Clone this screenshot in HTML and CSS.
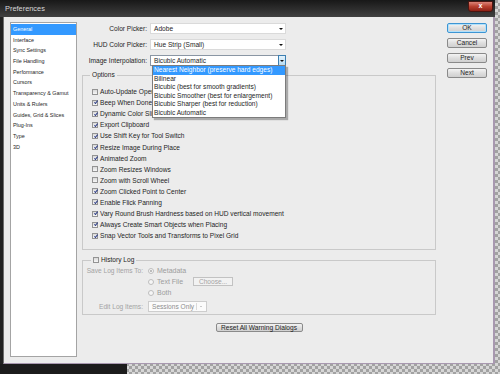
FILE: index.html
```html
<!DOCTYPE html>
<html lang="en">
<head>
    <meta charset="UTF-8">
    <meta name="viewport" content="width=device-width, initial-scale=1.0">
    <title>Preferences</title>
    <link rel="stylesheet" href="styles.css">
</head>
<body>
    <div class="window">
        <div class="titlebar">
            <span class="title">Preferences</span>
            <span class="close">x</span>
        </div>

        <div class="client">
            <ul class="sidebar">
                <li class="selected">General</li>
                <li>Interface</li>
                <li>Sync Settings</li>
                <li>File Handling</li>
                <li>Performance</li>
                <li>Cursors</li>
                <li>Transparency &amp; Gamut</li>
                <li>Units &amp; Rulers</li>
                <li>Guides, Grid &amp; Slices</li>
                <li>Plug-Ins</li>
                <li>Type</li>
                <li>3D</li>
            </ul>

            <div class="main">
                <div class="field">
                    <label>Color Picker:</label>
                    <div class="select"><span>Adobe</span><span class="arrow"></span></div>
                </div>
                <div class="field">
                    <label>HUD Color Picker:</label>
                    <div class="select"><span>Hue Strip (Small)</span><span class="arrow"></span></div>
                </div>
                <div class="field">
                    <label>Image Interpolation:</label>
                    <div class="select open">
                        <span>Bicubic Automatic</span><span class="arrow-btn"><span class="arrow"></span></span>
                        <ul class="popup">
                            <li class="hot">Nearest Neighbor (preserve hard edges)</li>
                            <li>Bilinear</li>
                            <li>Bicubic (best for smooth gradients)</li>
                            <li>Bicubic Smoother (best for enlargement)</li>
                            <li>Bicubic Sharper (best for reduction)</li>
                            <li>Bicubic Automatic</li>
                        </ul>
                    </div>
                </div>

                <fieldset class="group options">
                    <legend>Options</legend>
                    <div class="check"><span class="cb"></span>Auto-Update Open Documents</div>
                    <div class="check"><span class="cb on"></span>Beep When Done</div>
                    <div class="check"><span class="cb on"></span>Dynamic Color Sliders</div>
                    <div class="check"><span class="cb on"></span>Export Clipboard</div>
                    <div class="check"><span class="cb on"></span>Use Shift Key for Tool Switch</div>
                    <div class="check"><span class="cb on"></span>Resize Image During Place</div>
                    <div class="check"><span class="cb on"></span>Animated Zoom</div>
                    <div class="check"><span class="cb"></span>Zoom Resizes Windows</div>
                    <div class="check"><span class="cb"></span>Zoom with Scroll Wheel</div>
                    <div class="check"><span class="cb on"></span>Zoom Clicked Point to Center</div>
                    <div class="check"><span class="cb on"></span>Enable Flick Panning</div>
                    <div class="check"><span class="cb on"></span>Vary Round Brush Hardness based on HUD vertical movement</div>
                    <div class="check"><span class="cb on"></span>Always Create Smart Objects when Placing</div>
                    <div class="check"><span class="cb on"></span>Snap Vector Tools and Transforms to Pixel Grid</div>
                </fieldset>

                <fieldset class="group history">
                    <legend><span class="cb"></span>History Log</legend>
                    <div class="log-row">
                        <label>Save Log Items To:</label>
                        <span class="radio on"></span><span class="opt">Metadata</span>
                    </div>
                    <div class="log-row">
                        <label></label>
                        <span class="radio"></span><span class="opt">Text File</span>
                        <span class="choose">Choose...</span>
                    </div>
                    <div class="log-row">
                        <label></label>
                        <span class="radio"></span><span class="opt">Both</span>
                    </div>
                    <div class="log-row edit">
                        <label>Edit Log Items:</label>
                        <div class="mini-select"><span>Sessions Only</span><span class="mini-arrow"></span></div>
                    </div>
                </fieldset>

                <div class="reset-row">
                    <button class="btn reset">Reset All Warning Dialogs</button>
                </div>
            </div>

            <div class="buttons">
                <button class="btn default">OK</button>
                <button class="btn">Cancel</button>
                <button class="btn">Prev</button>
                <button class="btn">Next</button>
            </div>
        </div>
    </div>
    <div class="taskbar"></div>
</body>
</html>
```

FILE: styles.css
```css
body { margin: 0; width: 500px; height: 374px; overflow: hidden; font-family: "Liberation Sans", Arial, sans-serif; font-size: 6.6px; color: #1e1e1e; background: repeating-conic-gradient(#a2a2a2 0 25%, #d6d6d6 0 50%) 0 0 / 6px 6px; }

.window { width: 495px; height: 364px; background: #222; }
.titlebar { height: 17px; display: flex; justify-content: space-between; align-items: flex-start; background: linear-gradient(#181818, #404040); }
.title { color: #d8d8d8; font-size: 7.4px; line-height: 17px; padding-left: 5px; }
.close { width: 25px; height: 11px; margin: 1px 2px 0 0; box-sizing: border-box; background: linear-gradient(#dc8377, #b8402f 50%, #8e2015); border: 1px solid #4a1510; border-radius: 0 0 3px 3px; color: #fff; font-weight: bold; font-size: 7px; line-height: 8px; text-align: center; }

.client { margin-left: 3px; width: 492px; height: 347px; box-sizing: border-box; background: #ececec; border-left: 1px solid #6e6e6e; border-right: 2px solid #a898b0; border-bottom: 1px solid #a898b0; padding: 5px 6px 6px; display: flex; align-items: stretch; }

/* left category list */
.sidebar { width: 67px; box-sizing: border-box; margin: 0; padding: 1px 0; list-style: none; background: #fff; border: 1px solid #a4a4a4; font-size: 5.4px; }
.sidebar li { height: 10.7px; line-height: 10.7px; padding-left: 2px; }
.sidebar li.selected { background: #3399ff; color: #fff; }

/* middle column */
.main { width: 354px; margin: 1px 11px 0 5px; }
.field { display: flex; align-items: center; height: 11px; margin-bottom: 5px; }
.field label { width: 65px; text-align: right; margin-right: 3px; }
.select { position: relative; width: 136px; height: 11px; box-sizing: border-box; display: flex; align-items: center; justify-content: space-between; padding-left: 3px; background: #fff; border: 1px solid #dadada; }
.select.open { border-color: #8a96a4; }
.arrow { width: 0; height: 0; margin-right: 2px; border-left: 2px solid transparent; border-right: 2px solid transparent; border-top: 2px solid #111; }
.arrow-btn { width: 8px; height: 11px; box-sizing: border-box; margin-right: -1px; display: flex; align-items: center; justify-content: center; background: linear-gradient(#e4f3fc, #b6dcf4); border: 1px solid #3c7fb1; }
.arrow-btn .arrow { margin: 0; }

.popup { position: absolute; top: 100%; left: 1px; right: -1px; margin: 0; padding: 0; list-style: none; background: #fff; border: 1px solid #7c7c7c; box-shadow: 2px 2px 1px rgba(0, 0, 0, 0.28); z-index: 2; }
.popup li { height: 8.5px; line-height: 8.5px; padding-left: 1px; white-space: nowrap; }
.popup li.hot { background: #3399ff; color: #fff; }

.group { margin: 0; min-width: 0; border: 1px solid #c9c9c9; }
.group legend { line-height: 8px; padding: 0 2px; }
.options { margin-top: 5px; padding: 7px 0 8px 9px; }
.options legend { margin-left: -2px; }
.check { display: flex; align-items: center; height: 11.1px; white-space: nowrap; }

.cb { position: relative; display: inline-block; width: 6px; height: 6px; box-sizing: border-box; margin-right: 2px; border: 1px solid #939393; background: linear-gradient(#d9d9d9, #f7f7f7); vertical-align: middle; }
.cb.on::after { content: ''; position: absolute; left: 1.6px; top: -0.2px; width: 1.3px; height: 3px; border: solid #2c3c86; border-width: 0 1px 1px 0; transform: rotate(38deg); }

.history { margin-top: 6px; padding: 1px 0 2px 2px; color: #a3a3a3; }
.history legend { display: flex; align-items: center; margin-left: 6px; color: #1e1e1e; }
.log-row { display: flex; align-items: center; height: 11px; }
.log-row label { width: 58px; margin-right: 5px; text-align: right; white-space: nowrap; }
.log-row.edit { margin-top: 3px; height: 11px; }
.radio { width: 6px; height: 6px; box-sizing: border-box; margin-right: 3px; border: 1px solid #bdbdbd; border-radius: 50%; background: #f6f6f6; display: flex; align-items: center; justify-content: center; }
.radio.on::after { content: ''; width: 2px; height: 2px; border-radius: 50%; background: #a8a8a8; }
.opt { font-size: 7px; color: #9c9c9c; }
.choose { width: 40px; height: 9px; box-sizing: border-box; margin-left: 10px; border: 1px solid #c2c2c2; background: #f2f2f2; text-align: center; line-height: 7px; }
.mini-select { width: 59px; height: 11px; box-sizing: border-box; display: flex; align-items: center; justify-content: space-between; padding-left: 3px; border: 1px solid #cdcdcd; background: #fbfbfb; color: #8e8e8e; }
.mini-arrow { width: 9px; height: 7px; border-left: 1px solid #dadada; position: relative; }
.mini-arrow::after { content: ''; position: absolute; left: 2.5px; top: 2.5px; border-left: 1.5px solid transparent; border-right: 1.5px solid transparent; border-top: 1.5px solid #999; }

.reset-row { display: flex; justify-content: center; margin-top: 8px; }

/* buttons */
.btn { font-family: inherit; font-size: 6.6px; color: #1e1e1e; padding: 0; border: 1px solid #8a8a8a; border-radius: 2px; background: linear-gradient(#f4f4f4, #dedede 50%, #d0d0d0); }
.reset { width: 87px; height: 9px; line-height: 7px; }
.buttons { display: flex; flex-direction: column; gap: 5px; margin-top: 1px; }
.buttons .btn { width: 40px; height: 10px; line-height: 8px; }
.buttons .default { border-color: #3d95d3; box-shadow: inset 0 0 0 1px #b2e1fb; }

.taskbar { width: 127px; height: 10px; background: #1c1c1c; }
```
